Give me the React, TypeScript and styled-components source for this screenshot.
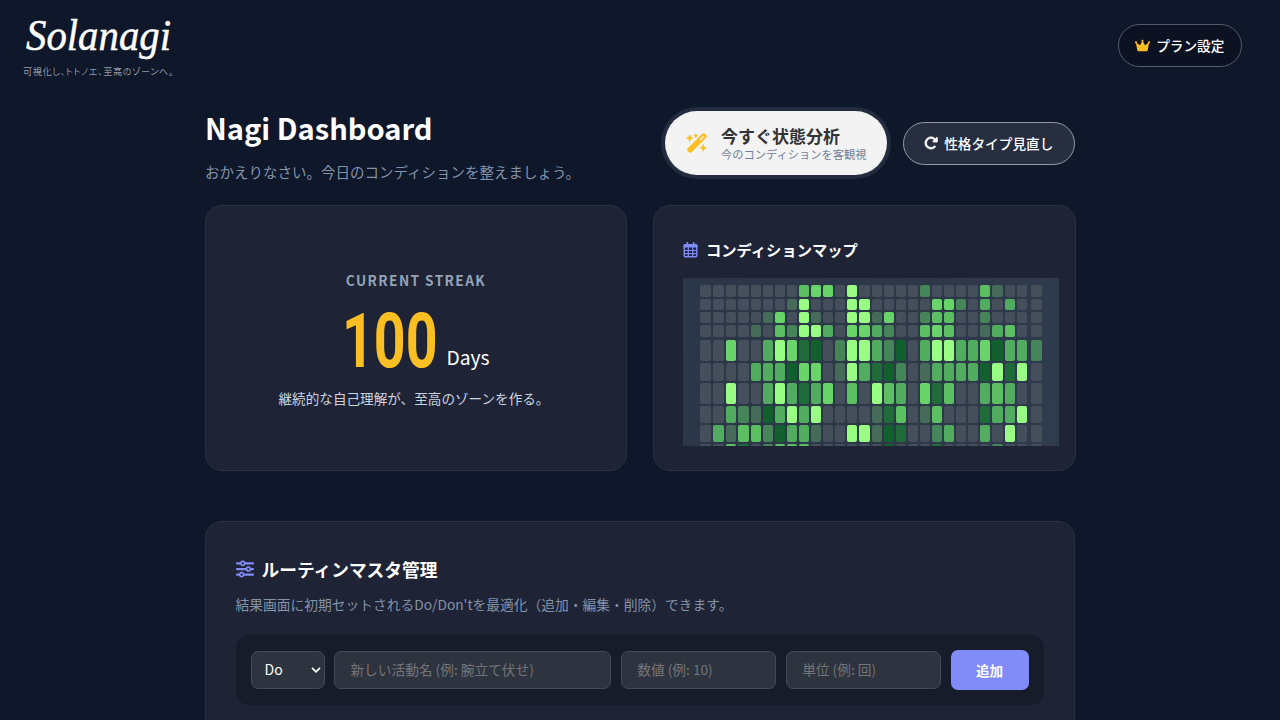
import React from 'react';
import styled, { createGlobalStyle } from 'styled-components';
import { FaCrown, FaRotateRight, FaSliders, FaWandMagicSparkles } from 'react-icons/fa6';

const GlobalStyle = createGlobalStyle`
  * { box-sizing: border-box; }
  html, body { margin: 0; background: #0f172a; }
  body {
    height: 720px;
    overflow: hidden;
    color: #fff;
    font-family: "Noto Sans CJK JP", sans-serif;
  }
  h1, h2, p { margin: 0; }
  button, input, select { font-family: inherit; }
`;

const Page = styled.div`
  height: 720px;
  overflow: hidden;
  white-space: nowrap;
`;

const Header = styled.header`
  height: 91px;
  padding: 0 38px 0 23px;
  display: flex;
  align-items: center;
  justify-content: space-between;
`;

const Brand = styled.div`
  width: 152px;
  display: flex;
  flex-direction: column;
`;

const Logo = styled.svg`
  display: block;
  width: 152px;
  height: 53px;
  overflow: visible;
`;

const Tagline = styled.p`
  font-family: "Liberation Serif", "Noto Sans CJK JP", serif;
  font-size: 9.2px;
  font-weight: 300;
  line-height: 14px;
  letter-spacing: 0.55px;
  font-feature-settings: "palt";
  color: #cbd0d8;
`;

const PillButton = styled.button<{ $width: number; $fill: string; $edge: string; $drop?: number }>`
  width: ${(p) => p.$width}px;
  height: 43px;
  margin-top: ${(p) => p.$drop ?? 0}px;
  padding: 0 0.5px 1px 0;
  display: flex;
  align-items: center;
  justify-content: center;
  gap: 6px;
  border: 1px solid ${(p) => p.$edge};
  border-radius: 22px;
  background: ${(p) => p.$fill};
  color: #fff;
  font-size: 13.65px;
  font-weight: 500;
  line-height: 20px;
`;

const Main = styled.main`
  width: 870px;
  margin: 0 0 0 205px;
`;

const Intro = styled.section`
  height: 114px;
  padding-top: 15px;
  display: flex;
  justify-content: space-between;
  align-items: flex-start;
`;

const Title = styled.h1`
  font-size: 29.1px;
  line-height: 42px;
  font-weight: 700;
`;

const Subtitle = styled.p`
  margin-top: 11.5px;
  font-size: 14.5px;
  line-height: 24px;
  color: #8492aa;
`;

const Actions = styled.div`
  display: flex;
  align-items: center;
  gap: 16px;
`;

const AnalyzeButton = styled.button`
  width: 222px;
  height: 64px;
  margin-top: 5px;
  padding: 0 0 0 21px;
  display: flex;
  align-items: center;
  gap: 13px;
  border: 0;
  border-radius: 32px;
  background: #f3f3f3;
  box-shadow: 0 0 0 4px #232c3e;
  text-align: left;
`;

const AnalyzeText = styled.div`
  padding-top: 1px;
`;

const AnalyzeTitle = styled.div`
  font-size: 17px;
  line-height: 20px;
  font-weight: 700;
  color: #333;
`;

const AnalyzeNote = styled.div`
  font-size: 11.25px;
  line-height: 16px;
  color: #718096;
`;

const CardRow = styled.section`
  display: grid;
  grid-template-columns: 422px 423px;
  gap: 26px;
  margin-right: -1px;
`;

const Card = styled.section`
  border: 1px solid #29303f;
  border-radius: 17px;
  background: #1e2335;
`;

const StreakCard = styled(Card)`
  height: 266px;
  padding-top: 64px;
  display: flex;
  flex-direction: column;
  align-items: center;
`;

const StreakLabel = styled.div`
  font-size: 13.7px;
  line-height: 20px;
  font-weight: 700;
  letter-spacing: 1.4px;
  color: #94a3b8;
`;

const StreakValue = styled.div`
  height: 86px;
  padding-top: 12px;
  display: flex;
  align-items: baseline;
  gap: 7px;
`;

const StreakNumber = styled.span`
  display: inline-block;
  width: 97px;
  font-family: Roboto, sans-serif;
  font-size: 76px;
  line-height: 74px;
  font-weight: 700;
  color: #fbbf24;
  transform: translateY(1.5px) scaleX(0.73);
  transform-origin: left;
`;

const StreakUnit = styled.span`
  font-size: 19.3px;
  line-height: 28px;
  font-weight: 400;
`;

const StreakNote = styled.p`
  margin: 10px 4px 0 0;
  font-size: 13.6px;
  line-height: 24px;
  font-weight: 400;
  color: #cbd5e1;
`;

const MapCard = styled(Card)`
  height: 266px;
  padding: 32px 16px 0 29px;
`;

const CardTitle = styled.h2<{ $size: number; $line: number }>`
  display: flex;
  align-items: center;
  gap: 8px;
  font-size: ${(p) => p.$size}px;
  line-height: ${(p) => p.$line}px;
  font-weight: 700;
  svg { color: #818cf8; }
`;

const HeatPanel = styled.div`
  height: 168.5px;
  margin-top: 16.5px;
  padding: 7.5px 0 0 16.8px;
  overflow: hidden;
  background: linear-gradient(100deg, #2b3748, #2d3849 60%, #2f3c4e);
`;

const HeatGrid = styled.div`
  display: grid;
  grid-template-columns: 11.3px 11px 10.4px repeat(23, 10.1px) 12px 11px;
  grid-template-rows: 11.7px 11.3px 11px 13.3px 20.7px 18px 21px 17px 17.3px 17px;
  gap: 2px;
`;

const HeatCell = styled.span<{ $tone: string; $short: boolean; $narrow: boolean }>`
  height: ${(p) => (p.$short ? '11.7px' : '100%')};
  width: ${(p) => (p.$narrow ? '10px' : '100%')};
  border-radius: 2px;
  background: ${(p) => p.$tone};
`;

const RoutineCard = styled(Card)`
  margin-top: 50px;
  height: 260px;
  padding: 32px 30px 0 29.5px;
`;

const RoutineNote = styled.p`
  margin-top: 8px;
  font-size: 13.75px;
  line-height: 24px;
  color: #8492a8;
`;

const AddForm = styled.form`
  height: 70px;
  margin-top: 19px;
  padding: 0 15px;
  display: grid;
  grid-template-columns: 74px 277px 155px 155px 78px;
  justify-content: space-between;
  align-items: center;
  border-radius: 13px;
  background: #171c2b;
`;

const SelectBox = styled.div`
  position: relative;
  height: 38px;
`;

const Select = styled.select`
  appearance: none;
  width: 100%;
  height: 38px;
  padding: 0 0 2px 13px;
  border: 1px solid #454955;
  border-radius: 7px;
  background: #2e3340;
  color: #fff;
  font-size: 14px;
`;

const SelectArrow = styled.svg`
  position: absolute;
  right: 3px;
  top: 15px;
  pointer-events: none;
`;

const Input = styled.input`
  width: 100%;
  height: 38px;
  padding: 0 15px 2px;
  border: 1px solid #454955;
  border-radius: 7px;
  background: #2e3340;
  color: #fff;
  font-size: 13.7px;
  &::placeholder { color: #757575; opacity: 1; }
`;

const AddButton = styled.button`
  height: 40px;
  padding: 0 1px 1px 0;
  border: 0;
  border-radius: 7px;
  background: #818cf8;
  color: #fff;
  font-size: 13.6px;
  font-weight: 700;
`;

function CalendarIcon() {
  return (
    <svg width="15" height="16" viewBox="0 0 15 16" fill="none" stroke="currentColor">
      <path d="M4.3 .8v2.4M10.7 .8v2.4" strokeWidth="1.7" strokeLinecap="round" />
      <path d="M.5 5.5V3.5Q.5 2 2 2h11q1.5 0 1.5 1.5v2z" fill="currentColor" stroke="none" />
      <rect x="1.2" y="3" width="12.6" height="11.8" rx="1.2" strokeWidth="1.4" />
      <path d="M5.3 5v9.5M9.7 5v9.5M1 8.5h13M1 11.7h13" strokeWidth="1.2" />
    </svg>
  );
}

const tones = ['#454f5b', '#466b59', '#46845a', '#52ac5f', '#5cc062', '#69d46a', '#99fd83', '#206b3a', '#13602f'];

const activity = [
  '0000000045506000002000041000',
  '0000000160006600000552030300',
  '0000015061006615002440020000',
  '0000104266305532004540013400',
  '0050036578026632803663358332',
  '0000333855016378201333386760',
  '0060036373504064305740034300',
  '0032183636000017401400073360',
  '0314428331006618700230030600',
  '0047024440000008000700002000',
];

export default function App() {
  return (
    <Page>
      <GlobalStyle />
      <Header>
        <Brand>
          <Logo viewBox="0 0 152 53">
            <text
              x="3"
              y="38"
              textLength="145"
              lengthAdjust="spacingAndGlyphs"
              fill="#fff"
              stroke="#fff"
              strokeWidth="0.5"
              fontFamily="'Liberation Serif', serif"
              fontStyle="italic"
              fontSize="45"
            >
              Solanagi
            </text>
          </Logo>
          <Tagline>可視化し、トトノエ、至高のゾーンへ。</Tagline>
        </Brand>
        <PillButton $width={124} $fill="#0c1222" $edge="#555b69">
          <FaCrown size={15} color="#fbbf24" />
          プラン設定
        </PillButton>
      </Header>
      <Main>
        <Intro>
          <div>
            <Title>Nagi Dashboard</Title>
            <Subtitle>おかえりなさい。今日のコンディションを整えましょう。</Subtitle>
          </div>
          <Actions>
            <AnalyzeButton>
              <FaWandMagicSparkles size={22} color="#fbbf24" />
              <AnalyzeText>
                <AnalyzeTitle>今すぐ状態分析</AnalyzeTitle>
                <AnalyzeNote>今のコンディションを客観視</AnalyzeNote>
              </AnalyzeText>
            </AnalyzeButton>
            <PillButton $width={172} $fill="#272e40" $edge="#959aa4" $drop={5}>
              <FaRotateRight size={14} stroke="currentColor" strokeWidth={18} />
              性格タイプ見直し
            </PillButton>
          </Actions>
        </Intro>
        <CardRow>
          <StreakCard>
            <StreakLabel>CURRENT STREAK</StreakLabel>
            <StreakValue>
              <StreakNumber>100</StreakNumber>
              <StreakUnit>Days</StreakUnit>
            </StreakValue>
            <StreakNote>継続的な自己理解が、至高のゾーンを作る。</StreakNote>
          </StreakCard>
          <MapCard>
            <CardTitle $size={15.3} $line={23}>
              <CalendarIcon />
              コンディションマップ
            </CardTitle>
            <HeatPanel>
              <HeatGrid>
                {activity.flatMap((row, r) =>
                  [...row].map((level, c) => (
                    <HeatCell key={`${r}-${c}`} $tone={tones[Number(level)]} $short={r === 3} $narrow={c === 26} />
                  )),
                )}
              </HeatGrid>
            </HeatPanel>
          </MapCard>
        </CardRow>
        <RoutineCard>
          <CardTitle $size={17.7} $line={30}>
            <FaSliders size={18} />
            ルーティンマスタ管理
          </CardTitle>
          <RoutineNote>結果画面に初期セットされるDo/Don'tを最適化（追加・編集・削除）できます。</RoutineNote>
          <AddForm>
            <SelectBox>
              <Select defaultValue="Do">
                <option>Do</option>
                <option>Don't</option>
              </Select>
              <SelectArrow width="12" height="8" viewBox="0 0 12 8">
                <path d="M2 1.8 6 5.8 10 1.8" fill="none" stroke="#fff" strokeWidth="1.7" />
              </SelectArrow>
            </SelectBox>
            <Input placeholder="新しい活動名 (例: 腕立て伏せ)" />
            <Input placeholder="数値 (例: 10)" />
            <Input placeholder="単位 (例: 回)" />
            <AddButton type="button">追加</AddButton>
          </AddForm>
        </RoutineCard>
      </Main>
    </Page>
  );
}
